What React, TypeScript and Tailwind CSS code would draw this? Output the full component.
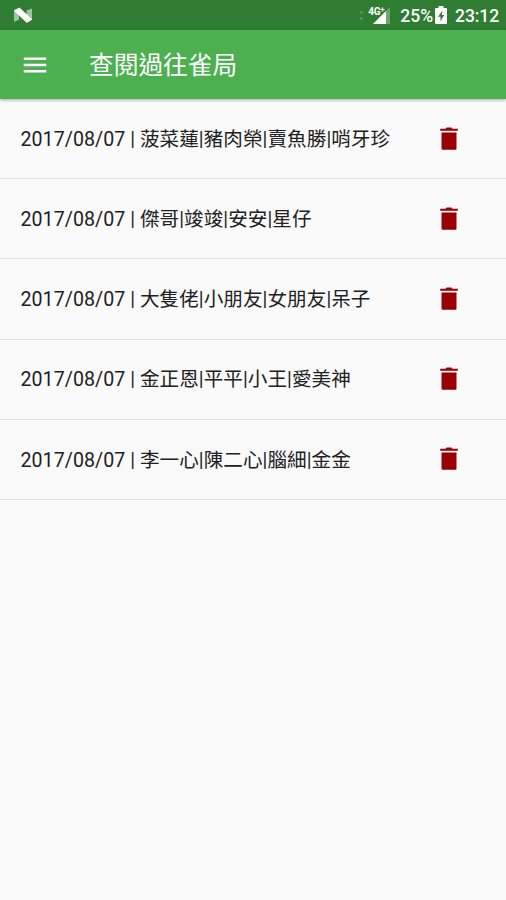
import { MdMenu } from "react-icons/md";

const games = [
  { date: "2017/08/07", players: ["菠菜蓮", "豬肉榮", "賣魚勝", "哨牙珍"] },
  { date: "2017/08/07", players: ["傑哥", "竣竣", "安安", "星仔"] },
  { date: "2017/08/07", players: ["大隻佬", "小朋友", "女朋友", "呆子"] },
  { date: "2017/08/07", players: ["金正恩", "平平", "小王", "愛美神"] },
  { date: "2017/08/07", players: ["李一心", "陳二心", "腦細", "金金"] },
];

function NougatIcon() {
  return (
    <svg width="20" height="16" viewBox="0 0 20 16">
      <path d="M1 4 6 1.500v11L1 15zM13.500 3.500l5.500-2v11.500L13.500 15z" fill="#9cc49e" />
      <path d="M1.200 3.600 6.500 1 18.800 12.400 13.800 15.400z" fill="#fff" stroke="#fff" strokeWidth="0.8" />
    </svg>
  );
}

function SignalIcon() {
  return (
    <svg width="17" height="17" viewBox="0 0 17 17">
      <path d="M17 0v17H0z" fill="#fff" opacity="0.3" />
      <path d="M13 4v13H0z" fill="#fff" />
    </svg>
  );
}

function BatteryIcon() {
  return (
    <svg width="12" height="18" viewBox="0 0 12 18">
      <path d="M3.500 0h5v2H11a1 1 0 0 1 1 1v14a1 1 0 0 1-1 1H1a1 1 0 0 1-1-1V3a1 1 0 0 1 1-1h2.500z" fill="#fff" />
      <path d="M7.500 4.500 3 10.800h2.500v4.500L9.200 9H6.800z" fill="#2e7d32" />
    </svg>
  );
}

function TrashIcon() {
  return (
    <svg width="30" height="30" viewBox="0 0 30 30" className="text-[#990000]" fill="currentColor">
      <path d="M6.200 4.700h5.300L12.700 3.500h4.600l1.200 1.200h5.300v2.100H6.200z" />
      <path d="M7.500 8.500h15v16.300a1 1 0 0 1-1 1h-13a1 1 0 0 1-1-1z" />
    </svg>
  );
}

function StatusBar() {
  return (
    <div className="flex h-[30px] items-center justify-between bg-[#2e7d32] pl-[13px] pr-[7px] text-white">
      <NougatIcon />
      <div className="flex items-center">
        <div className="mr-[5px] flex flex-col gap-[3px]">
          <span className="size-[3px] rounded-full bg-white/20" />
          <span className="size-[3px] rounded-full bg-white/20" />
        </div>
        <div className="relative flex w-[22px] justify-end">
          <SignalIcon />
          <span className="absolute -top-[1px] left-0 text-[10px] font-bold leading-[11px] tracking-[-0.3px]">4G</span>
          <span className="absolute -top-[1px] left-[12px] text-[8px] font-bold leading-[8px]">+</span>
        </div>
        <span className="ml-[10px] mt-[3px] text-[17.5px] font-medium leading-none">25%</span>
        <span className="ml-[2px]">
          <BatteryIcon />
        </span>
        <span className="ml-[8px] mt-[3px] text-[17.5px] font-medium leading-none tracking-[-0.1px]">23:12</span>
      </div>
    </div>
  );
}

export default function App() {
  return (
    <div className="min-h-screen bg-[#fafafa] font-[Roboto,'Noto_Sans_CJK_TC',sans-serif]">
      <StatusBar />

      <header className="relative flex h-[69px] items-center bg-[#4caf50] pl-[20px] text-white shadow-[0_1px_3px_rgba(0,0,0,0.35)]">
        <MdMenu size={30} />
        <h1 className="ml-[39px] pt-[4px] text-[24.7px] leading-none">查閱過往雀局</h1>
      </header>

      <ul>
        {games.map((game, i) => (
          <li
            key={i}
            className="flex h-[80.2px] items-center justify-between border-b-[1.5px] border-[#e0e0e0] pl-[20.5px] pr-[42px]"
          >
            <span className="whitespace-nowrap pt-[2px] text-[19.6px] leading-none tracking-[0.05px] text-[#212121]">
              {game.date} | {game.players.join("|")}
            </span>
            <TrashIcon />
          </li>
        ))}
      </ul>
    </div>
  );
}
